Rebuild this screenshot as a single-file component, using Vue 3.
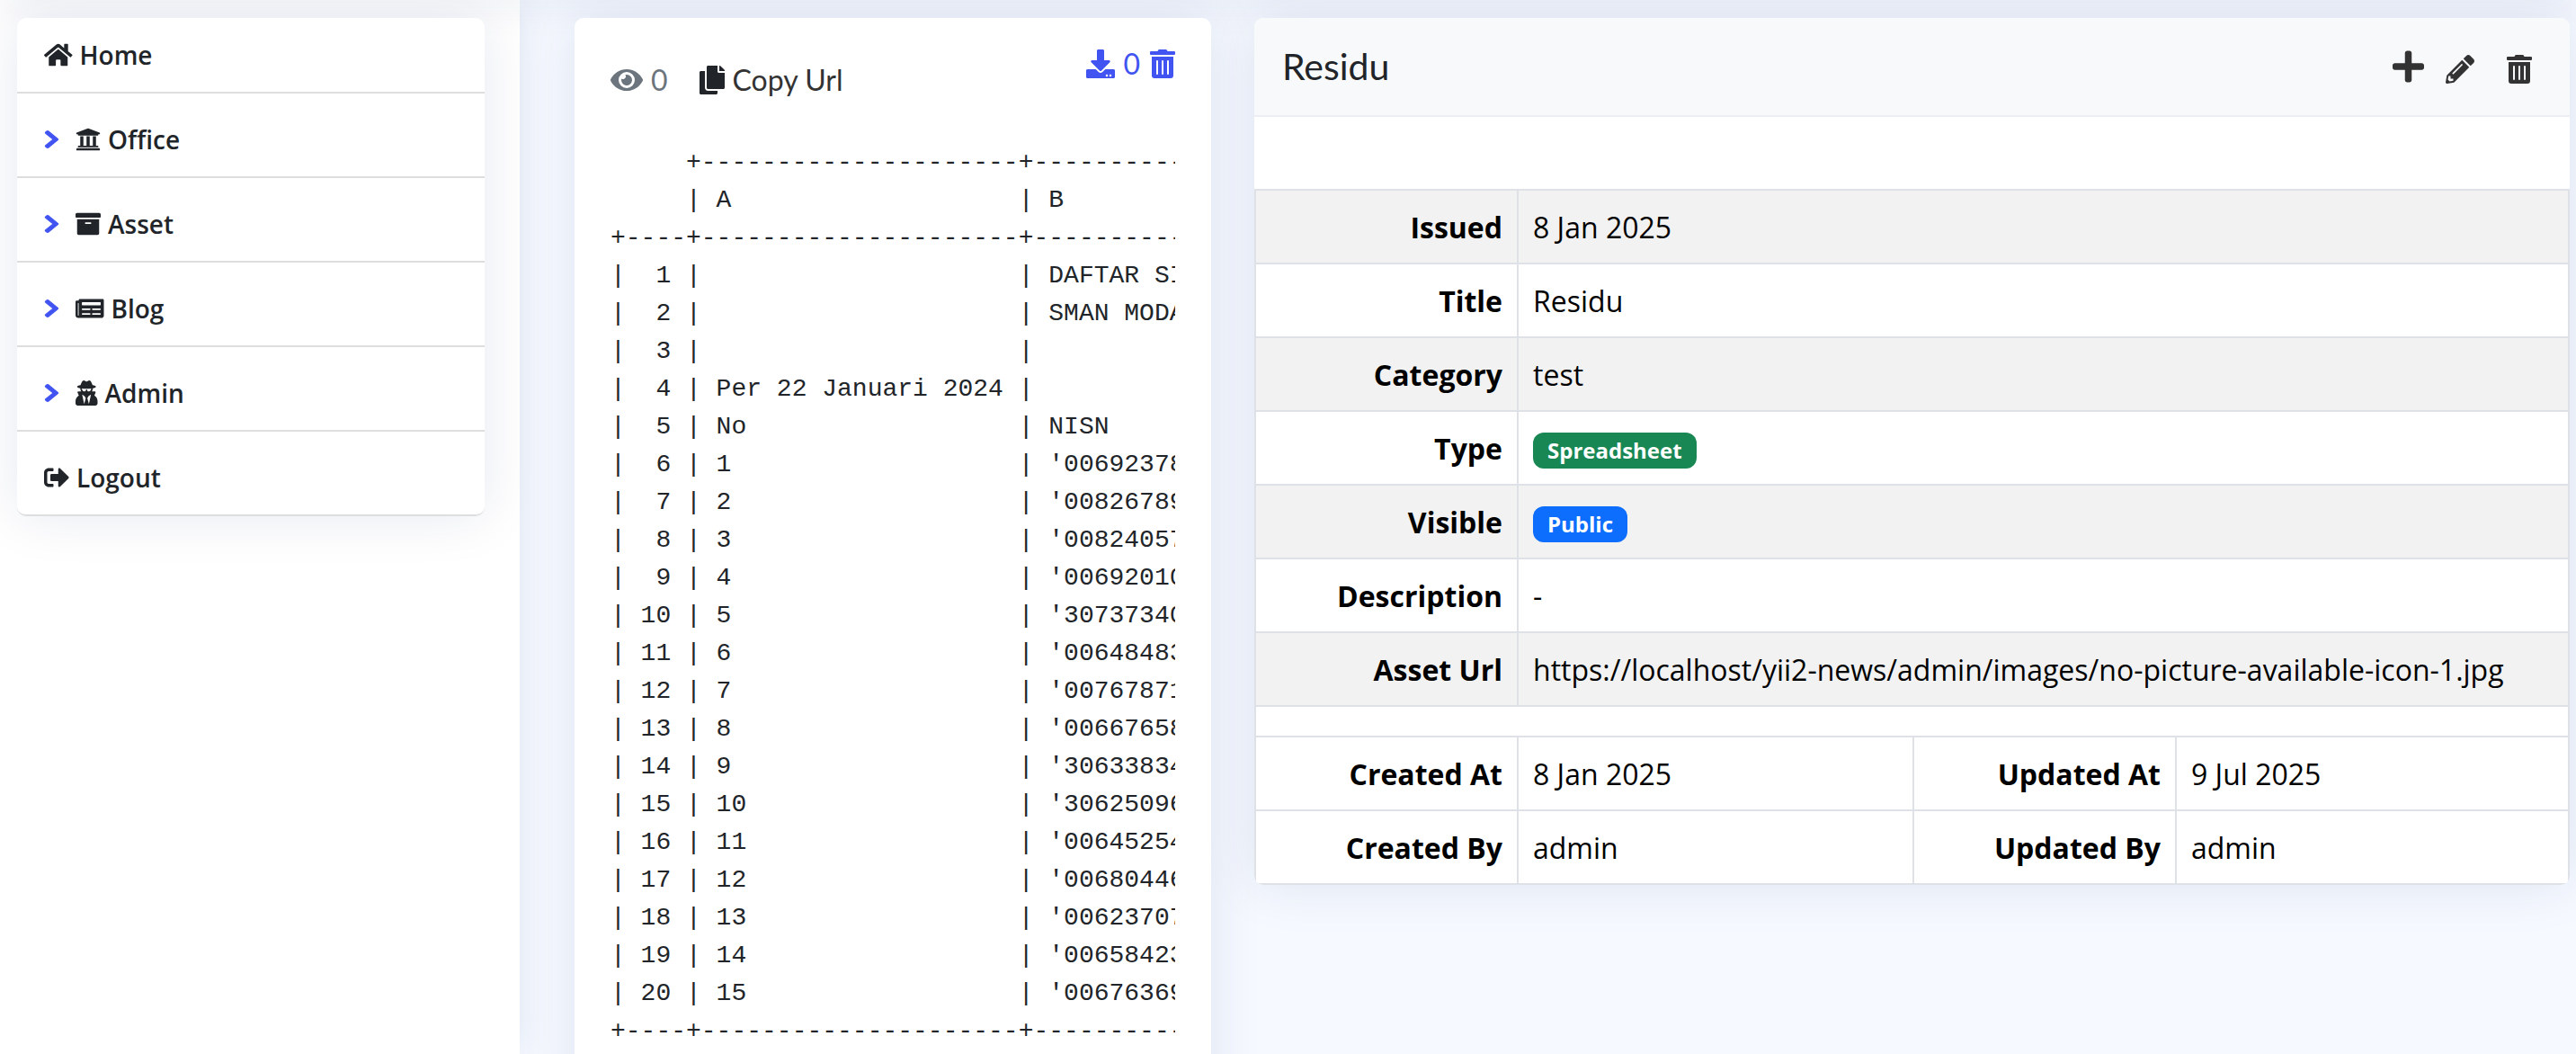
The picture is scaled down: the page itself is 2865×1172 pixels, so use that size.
<template>
  <div class="page">
    <aside class="sidebar">
      <ul class="menu">
        <li v-for="item in menu" :key="item.label" class="menu-item">
          <svg v-if="item.sub" class="chevron" viewBox="0 0 320 512" preserveAspectRatio="none"><path :d="icons.chevron" /></svg>
          <svg class="menu-icon" :viewBox="`0 0 ${item.w} 512`" :style="{ width: item.w * 28 / 512 + 'px' }"><path :d="icons[item.icon]" /></svg>
          <span>{{ item.label }}</span>
        </li>
      </ul>
    </aside>

    <main class="main">
      <section class="card preview">
        <div class="preview-top">
          <div class="preview-left">
            <svg class="ico-eye" viewBox="0 0 576 512"><path :d="icons.eye" /></svg>
            <span class="count">0</span>
            <a class="copy">
              <svg class="ico-copy" viewBox="0 0 448 512"><path :d="icons.copy" /></svg>
              Copy Url
            </a>
          </div>
          <div class="preview-right">
            <svg class="ico-dl" viewBox="0 0 512 512"><path :d="icons.download" /></svg>
            <span>0</span>
            <svg class="ico-del" viewBox="0 0 448 512"><path :d="icons.trash" /></svg>
          </div>
        </div>
        <pre class="sheet">{{ sheet }}</pre>
      </section>

      <section class="card detail">
        <header class="detail-head">
          <h3>Residu</h3>
          <div class="actions">
            <svg class="ico-plus" viewBox="0 0 448 512"><path :d="icons.plus" /></svg>
            <svg class="ico-edit" viewBox="0 0 512 512"><path :d="icons.pencil" /></svg>
            <svg class="ico-trash" viewBox="0 0 448 512"><path :d="icons.trash" /></svg>
          </div>
        </header>

        <table class="info striped">
          <tbody>
            <tr v-for="row in rows" :key="row.label">
              <th>{{ row.label }}</th>
              <td>
                <span v-if="row.badge" class="badge" :class="row.badge">{{ row.value }}</span>
                <template v-else>{{ row.value }}</template>
              </td>
            </tr>
          </tbody>
        </table>

        <div class="table-gap"></div>

        <table class="info meta">
          <colgroup>
            <col class="col-label" />
            <col class="col-value" />
            <col class="col-label" />
            <col />
          </colgroup>
          <tbody>
            <tr>
              <th>Created At</th><td>8 Jan 2025</td>
              <th>Updated At</th><td>9 Jul 2025</td>
            </tr>
            <tr>
              <th>Created By</th><td>admin</td>
              <th>Updated By</th><td>admin</td>
            </tr>
          </tbody>
        </table>
      </section>
    </main>
  </div>
</template>

<script setup>
const icons = {
  chevron: 'M285.476 272.971L91.132 467.314c-9.373 9.373-24.569 9.373-33.941 0l-22.667-22.667c-9.357-9.357-9.375-24.522-.04-33.901L188.505 256 34.484 101.255c-9.335-9.379-9.317-24.544.04-33.901l22.667-22.667c9.373-9.373 24.569-9.373 33.941 0L285.475 239.03c9.373 9.372 9.373 24.568.001 33.941z',
  home: 'M280.37 148.26L96 300.11V464a16 16 0 0 0 16 16l112.06-.29a16 16 0 0 0 15.92-16V368a16 16 0 0 1 16-16h64a16 16 0 0 1 16 16v95.64a16 16 0 0 0 16 16.05L464 480a16 16 0 0 0 16-16V300L295.67 148.26a12.19 12.19 0 0 0-15.3 0zM571.6 251.47L488 182.56V44.05a12 12 0 0 0-12-12h-56a12 12 0 0 0-12 12v72.61L318.47 43a48 48 0 0 0-61 0L4.34 251.47a12 12 0 0 0-1.6 16.9l25.5 31A12 12 0 0 0 45.15 301l235.22-193.74a12.19 12.19 0 0 1 15.3 0L530.9 301a12 12 0 0 0 16.9-1.6l25.5-31a12 12 0 0 0-1.7-16.93z',
  office: 'M496 128v16a8 8 0 0 1-8 8h-24v12c0 6.627-5.373 12-12 12H60c-6.627 0-12-5.373-12-12v-12H24a8 8 0 0 1-8-8v-16a8 8 0 0 1 4.941-7.392l232-88a7.996 7.996 0 0 1 6.118 0l232 88A8 8 0 0 1 496 128zm-24 304H40c-13.255 0-24 10.745-24 24v16a8 8 0 0 0 8 8h464a8 8 0 0 0 8-8v-16c0-13.255-10.745-24-24-24zM96 192v192H60c-6.627 0-12 5.373-12 12v20h416v-20c0-6.627-5.373-12-12-12h-36V192h-64v192h-64V192h-64v192h-64V192H96z',
  archive: 'M32 448c0 17.7 14.3 32 32 32h384c17.7 0 32-14.3 32-32V160H32v288zm160-212c0-6.6 5.4-12 12-12h104c6.6 0 12 5.4 12 12v8c0 6.6-5.4 12-12 12H204c-6.6 0-12-5.4-12-12v-8zM480 32H32C14.3 32 0 46.3 0 64v48c0 8.8 7.2 16 16 16h480c8.8 0 16-7.2 16-16V64c0-17.7-14.3-32-32-32z',
  newspaper: 'M552 64H88c-13.255 0-24 10.745-24 24v8H24c-13.255 0-24 10.745-24 24v272c0 30.928 25.072 56 56 56h472c26.51 0 48-21.49 48-48V88c0-13.255-10.745-24-24-24zM56 400a8 8 0 0 1-8-8V144h16v248a8 8 0 0 1-8 8zm236-16H140c-6.627 0-12-5.373-12-12v-8c0-6.627 5.373-12 12-12h152c6.627 0 12 5.373 12 12v8c0 6.627-5.373 12-12 12zm208 0H348c-6.627 0-12-5.373-12-12v-8c0-6.627 5.373-12 12-12h152c6.627 0 12 5.373 12 12v8c0 6.627-5.373 12-12 12zm-208-96H140c-6.627 0-12-5.373-12-12v-8c0-6.627 5.373-12 12-12h152c6.627 0 12 5.373 12 12v8c0 6.627-5.373 12-12 12zm208 0H348c-6.627 0-12-5.373-12-12v-8c0-6.627 5.373-12 12-12h152c6.627 0 12 5.373 12 12v8c0 6.627-5.373 12-12 12zm0-96H140c-6.627 0-12-5.373-12-12v-40c0-6.627 5.373-12 12-12h360c6.627 0 12 5.373 12 12v40c0 6.627-5.373 12-12 12z',
  secret: 'M383.9 308.3l23.9-62.6c4-10.5-3.7-21.7-15-21.7h-58.5c11-18.9 17.8-40.6 17.8-64v-.3c39.2-7.8 64-19.1 64-31.7 0-13.3-27.3-25.1-70.1-33-9.2-32.8-27-65.8-40.6-82.8-9.5-11.9-25.9-15.6-39.5-8.8l-27.6 13.8c-9 4.5-19.6 4.5-28.6 0L182.1 3.4c-13.6-6.8-30-3.1-39.5 8.8-13.5 17-31.4 50-40.6 82.8-42.7 7.9-70 19.7-70 33 0 12.6 24.8 23.9 64 31.7v.3c0 23.4 6.8 45.1 17.8 64H56.3c-11.5 0-19.2 11.7-14.7 22.3l25.8 60.2C27.3 329.8 0 372.7 0 422.4v44.8C0 491.9 20.1 512 44.8 512h358.4c24.7 0 44.8-20.1 44.8-44.8v-44.8c0-48.4-25.8-90.4-64.1-114.1zM176 480l-41.6-192 49.6 32 24 40-32 120zm96 0l-32-120 24-40 49.6-32L272 480zm41.7-298.5c-3.9 11.9-7 24.6-16.5 33.4-10.1 9.3-48 22.4-64-25-2.8-8.4-15.4-8.4-18.3 0-17 50.2-56 32.4-64 25-9.5-8.8-12.7-21.5-16.5-33.4-.8-2.5-6.3-5.7-6.3-5.8v-10.8c28.3 3.6 61 5.8 96 5.8s67.7-2.1 96-5.8v10.8c-.1.1-5.6 3.2-6.4 5.8z',
  logout: 'M497 273L329 441c-15 15-41 4.5-41-17v-96H152c-13.3 0-24-10.7-24-24v-96c0-13.3 10.7-24 24-24h136V88c0-21.4 25.9-32 41-17l168 168c9.3 9.4 9.3 24.6 0 34zM192 436v-40c0-6.6-5.4-12-12-12H96c-17.7 0-32-14.3-32-32V160c0-17.7 14.3-32 32-32h84c6.6 0 12-5.4 12-12V76c0-6.6-5.4-12-12-12H96c-53 0-96 43-96 96v192c0 53 43 96 96 96h84c6.6 0 12-5.4 12-12z',
  eye: 'M572.52 241.4C518.29 135.59 410.93 64 288 64S57.68 135.64 3.48 241.41a32.35 32.35 0 0 0 0 29.19C57.71 376.41 165.07 448 288 448s230.32-71.64 284.52-177.41a32.35 32.35 0 0 0 0-29.19zM288 400a144 144 0 1 1 144-144 143.93 143.93 0 0 1-144 144zm0-240a95.31 95.31 0 0 0-25.31 3.79 47.85 47.85 0 0 1-66.9 66.9A95.78 95.78 0 1 0 288 160z',
  copy: 'M320 448v40c0 13.255-10.745 24-24 24H24c-13.255 0-24-10.745-24-24V120c0-13.255 10.745-24 24-24h72v296c0 30.879 25.121 56 56 56h168zm0-344V0H152c-13.255 0-24 10.745-24 24v368c0 13.255 10.745 24 24 24h272c13.255 0 24-10.745 24-24V128H344c-13.2 0-24-10.8-24-24zm120.971-31.029L375.029 7.029A24 24 0 0 0 358.059 0H352v96h96v-6.059a24 24 0 0 0-7.029-16.97z',
  download: 'M216 0h80c13.3 0 24 10.7 24 24v168h87.7c17.8 0 26.7 21.5 14.1 34.1L269.7 378.3c-7.5 7.5-19.8 7.5-27.3 0L90.1 226.1c-12.6-12.6-3.7-34.1 14.1-34.1H192V24c0-13.3 10.7-24 24-24zm296 376v112c0 13.3-10.7 24-24 24H24c-13.3 0-24-10.7-24-24V376c0-13.3 10.7-24 24-24h146.7l49 49c20.1 20.1 52.5 20.1 72.6 0l49-49H488c13.3 0 24 10.7 24 24zm-124 88c0-11-9-20-20-20s-20 9-20 20 9 20 20 20 20-9 20-20zm64 0c0-11-9-20-20-20s-20 9-20 20 9 20 20 20 20-9 20-20z',
  trash: 'M32 464a48 48 0 0 0 48 48h288a48 48 0 0 0 48-48V128H32zm272-256a16 16 0 0 1 32 0v224a16 16 0 0 1-32 0zm-96 0a16 16 0 0 1 32 0v224a16 16 0 0 1-32 0zm-96 0a16 16 0 0 1 32 0v224a16 16 0 0 1-32 0zM432 32H312l-9.4-18.7A24 24 0 0 0 281.1 0H166.8a23.72 23.72 0 0 0-21.4 13.3L136 32H16A16 16 0 0 0 0 48v32a16 16 0 0 0 16 16h416a16 16 0 0 0 16-16V48a16 16 0 0 0-16-16z',
  plus: 'M416 208H272V64c0-17.67-14.33-32-32-32h-32c-17.67 0-32 14.33-32 32v144H32c-17.67 0-32 14.33-32 32v32c0 17.67 14.33 32 32 32h144v144c0 17.67 14.33 32 32 32h32c17.67 0 32-14.33 32-32V304h144c17.67 0 32-14.33 32-32v-32c0-17.67-14.33-32-32-32z',
  pencil: 'M497.9 142.1l-46.1 46.1c-4.7 4.7-12.3 4.7-17 0l-111-111c-4.7-4.7-4.7-12.3 0-17l46.1-46.1c18.7-18.7 49.1-18.7 67.9 0l60.1 60.1c18.8 18.7 18.8 49.1 0 67.9zM284.2 99.8L21.6 362.4.4 483.9c-2.9 16.4 11.4 30.6 27.8 27.8l121.5-21.3 262.6-262.6c4.7-4.7 4.7-12.3 0-17l-111-111c-4.8-4.7-12.4-4.7-17.1 0zM124.1 339.9c-5.5-5.5-5.5-14.3 0-19.8l154-154c5.5-5.5 14.3-5.5 19.8 0s5.5 14.3 0 19.8l-154 154c-5.5 5.5-14.3 5.5-19.8 0zM88 424h48v36.3l-64.5 11.3-31.1-31.1L51.7 376H88v48z'
}

const menu = [
  { label: 'Home', icon: 'home', w: 576 },
  { label: 'Office', icon: 'office', w: 512, sub: true },
  { label: 'Asset', icon: 'archive', w: 512, sub: true },
  { label: 'Blog', icon: 'newspaper', w: 576, sub: true },
  { label: 'Admin', icon: 'secret', w: 448, sub: true },
  { label: 'Logout', icon: 'logout', w: 512 }
]

const rows = [
  { label: 'Issued', value: '8 Jan 2025' },
  { label: 'Title', value: 'Residu' },
  { label: 'Category', value: 'test' },
  { label: 'Type', value: 'Spreadsheet', badge: 'green' },
  { label: 'Visible', value: 'Public', badge: 'blue' },
  { label: 'Description', value: '-' },
  { label: 'Asset Url', value: 'https://localhost/yii2-news/admin/images/no-picture-available-icon-1.jpg' }
]

const bar = '+---------------------+----------------------------------'
const sheet = [
  '     ' + bar,
  '     | A                   | B',
  '+----' + bar,
  '|  1 |                     | DAFTAR SISWA',
  '|  2 |                     | SMAN MODAL BANGSA',
  '|  3 |                     |',
  '|  4 | Per 22 Januari 2024 |',
  '|  5 | No                  | NISN',
  "|  6 | 1                   | '0069237812",
  "|  7 | 2                   | '0082678934",
  "|  8 | 3                   | '0082405712",
  "|  9 | 4                   | '0069201065",
  "| 10 | 5                   | '3073734021",
  "| 11 | 6                   | '0064848310",
  "| 12 | 7                   | '0076787156",
  "| 13 | 8                   | '0066765842",
  "| 14 | 9                   | '3063383417",
  "| 15 | 10                  | '3062509663",
  "| 16 | 11                  | '0064525490",
  "| 17 | 12                  | '0068044628",
  "| 18 | 13                  | '0062370735",
  "| 19 | 14                  | '0065842391",
  "| 20 | 15                  | '0067636974",
  '+----' + bar
].join('\n')
</script>

<style scoped>
.page {
  position: relative;
  display: flex;
  height: 1172px;
  overflow: hidden;
  background: #f6f9ff;
  color: #212529;
  font-family: "Open Sans", sans-serif;
}

/* shadow of the top bar, which is scrolled out of view */
.page::before {
  content: "";
  position: absolute;
  top: -20px;
  left: 0;
  right: 0;
  height: 20px;
  box-shadow: 0 4px 40px rgba(1, 41, 112, 0.1);
  z-index: 1;
}

.sidebar {
  position: relative;
  width: 578px;
  flex: none;
  padding: 20px 39px 0 19px;
  box-sizing: border-box;
  background: #fff;
  box-shadow: 0 0 40px rgba(1, 41, 112, 0.1);
}

.menu {
  position: relative;
  z-index: 2;
  list-style: none;
  margin: 0;
  padding: 0;
  background: #fff;
  border-radius: 10px;
  box-shadow: 0 0 60px rgba(1, 41, 112, 0.1);
}

.menu-item {
  display: flex;
  align-items: center;
  height: 82px;
  margin-bottom: 10px;
  padding-left: 30px;
  border-bottom: 2px solid #dedede;
  font-size: 28px;
  font-weight: 600;
  gap: 8px;
}

.menu-item:last-child {
  border-radius: 0 0 10px 10px;
}

.menu-item svg {
  fill: #212529;
  height: 28px;
  flex: none;
}

.menu-item .chevron {
  width: 17px;
  height: 22px;
  margin-right: 10px;
  overflow: visible;
  fill: #4154f1;
  stroke: #4154f1;
  stroke-width: 24;
}

.main {
  flex: 1;
  display: flex;
  align-items: flex-start;
  padding: 20px 7px 0 61px;
  gap: 48px;
}

.card {
  position: relative;
  z-index: 2;
  background: #fff;
  border-radius: 10px;
  box-shadow: 0 0 60px rgba(1, 41, 112, 0.1);
}

.preview {
  width: 708px;
  flex: none;
  box-sizing: border-box;
  padding: 0 40px 40px;
  min-height: 1300px;
}

.preview-top {
  display: flex;
  justify-content: space-between;
  align-items: flex-start;
  height: 140px;
  font-family: Lato, sans-serif;
  font-size: 32px;
}

.preview-left {
  display: flex;
  align-items: center;
  margin-top: 49px;
  color: #6c757d;
}

.ico-eye {
  width: 36px;
  height: 32px;
  fill: #6c757d;
  margin-right: 9px;
}

.count {
  margin-right: 35px;
}

.copy {
  display: flex;
  align-items: center;
  gap: 9px;
  color: #333;
}

.ico-copy {
  width: 28px;
  height: 32px;
  fill: #212529;
}

.preview-right {
  display: flex;
  align-items: center;
  margin-top: 31px;
  color: #4154f1;
}

.preview-right svg {
  fill: #4154f1;
  height: 32px;
}

.ico-dl {
  width: 32px;
  margin-right: 9px;
}

.ico-del {
  width: 28px;
  margin-left: 11px;
}

.sheet {
  margin: 0;
  overflow: hidden;
  white-space: pre;
  font-family: "Liberation Mono", monospace;
  font-size: 28px;
  line-height: 42px;
}

.detail {
  flex: 1;
  overflow: hidden;
}

.detail-head {
  display: flex;
  justify-content: space-between;
  align-items: center;
  height: 108px;
  padding: 0 42px 0 31px;
  background: #f8f9fa;
  border-bottom: 2px solid #eceef4;
}

.detail-head h3 {
  margin: -2px 0 0;
  font-family: Lato, sans-serif;
  font-size: 41px;
  font-weight: 400;
}

.actions {
  display: flex;
  align-items: center;
  gap: 24px;
}

.actions svg {
  fill: #333;
}

.ico-plus {
  width: 35px;
  height: 40px;
}

.ico-edit {
  width: 32px;
  height: 32px;
  margin-top: 6px;
}

.ico-trash {
  width: 28px;
  height: 32px;
  margin-top: 6px;
  margin-left: 12px;
}

.info {
  width: 100%;
  border-collapse: collapse;
  table-layout: fixed;
  font-size: 32px;
}

.striped {
  margin-top: 80px;
}

.table-gap {
  height: 32px;
  border-left: 2px solid #dee2e6;
  border-right: 2px solid #dee2e6;
}

.col-label {
  width: 292px;
}

.col-value {
  width: 440px;
}

.info th,
.info td {
  height: 80px;
  padding: 0 16px;
  border: 2px solid #dee2e6;
  font-weight: 400;
  text-align: left;
  color: #000;
}

.info th {
  font-weight: 700;
  text-align: right;
}

.striped th {
  width: 292px;
  box-sizing: border-box;
}

.striped tr:nth-child(odd) {
  background: #f2f2f2;
}

.badge {
  display: inline-block;
  padding: 8px 16px;
  border-radius: 12px;
  color: #fff;
  font-size: 24px;
  font-weight: 700;
  line-height: 1;
}

.green {
  background: #198754;
}

.blue {
  background: #0d6efd;
}
</style>
